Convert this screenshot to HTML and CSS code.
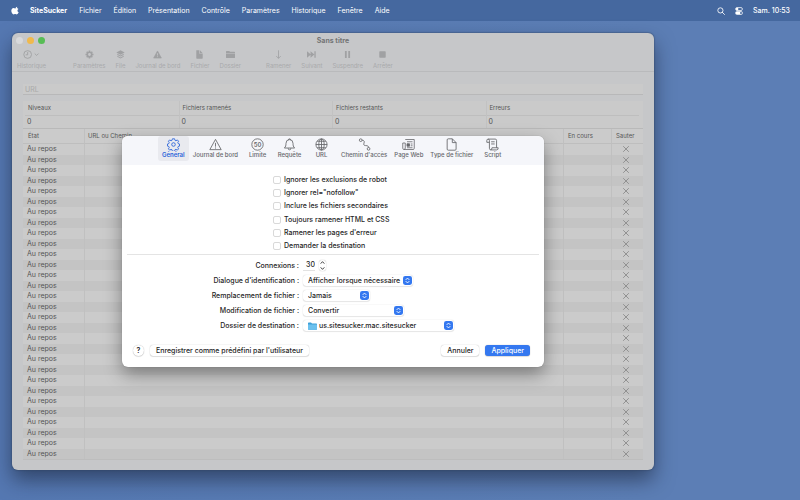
FILE: index.html
```html
<!DOCTYPE html>
<html lang="fr">
<head>
<meta charset="utf-8">
<title>SiteSucker</title>
<link rel="stylesheet" href="styles.css">
</head>
<body>
<svg class="sprite" aria-hidden="true">
  <symbol id="updown" viewBox="0 0 10 10"><rect width="10" height="10" rx="2.4" fill="#3478f0"/><path d="M3.300 4 5 2.300 6.700 4M3.300 6 5 7.700 6.700 6" fill="none" stroke="#fff" stroke-width="1" stroke-linecap="round" stroke-linejoin="round"/></symbol>
  <symbol id="cross" viewBox="0 0 8 8"><path d="M1.200 1.200 6.800 6.800M6.800 1.200 1.200 6.800" fill="none" stroke="#8b8b8b" stroke-width=".9"/></symbol>
</svg>

<header class="menubar">
  <svg class="apple" viewBox="0 0 24 24" aria-hidden="true"><path fill="#fff" d="M16.600 1c.2 1.500-.4 2.900-1.300 3.900-.9 1.100-2.300 1.900-3.700 1.800-.2-1.400.5-2.900 1.300-3.800C13.800 1.900 15.400 1.100 16.600 1zM21 17.200c-.6 1.300-.9 1.900-1.700 3-1.100 1.600-2.600 3.500-4.500 3.600-1.700 0-2.100-1.100-4.400-1.100s-2.800 1.100-4.500 1.100c-1.900-.1-3.300-1.900-4.400-3.500C-1.400 15.800-1.700 10.600.2 7.900 1.500 5.900 3.600 4.800 5.600 4.800c2 0 3.300 1.100 4.900 1.100 1.600 0 2.600-1.100 4.900-1.100 1.800 0 3.600 1 4.900 2.600-4.300 2.400-3.600 8.500.7 9.800z" transform="translate(2 0)"/></svg>
  <nav class="menus">
    <a class="app" href="#">SiteSucker</a>
    <a href="#">Fichier</a>
    <a href="#">Édition</a>
    <a href="#">Présentation</a>
    <a href="#">Contrôle</a>
    <a href="#">Paramètres</a>
    <a href="#">Historique</a>
    <a href="#">Fenêtre</a>
    <a href="#">Aide</a>
  </nav>
  <div class="status">
    <svg class="status-icon" viewBox="0 0 16 16" fill="none" stroke="#fff" stroke-width="1.700"><circle cx="6.800" cy="6.800" r="5.200"/><path d="M10.600 10.600 15 15" stroke-linecap="round"/></svg>
    <svg class="status-icon" viewBox="0 0 16 16"><rect x="1.200" y="1.200" width="13.600" height="5.800" rx="2.800" fill="none" stroke="#fff" stroke-width="1.500"/><circle cx="4.300" cy="4.100" r="2.500" fill="#fff"/><rect x=".5" y="8.600" width="15" height="7" rx="3.400" fill="#fff"/><circle cx="12" cy="12.100" r="2" fill="#45689f"/></svg>
    <time>Sam. 10:53</time>
  </div>
</header>

<main class="desktop">
  <section class="window">
    <div class="titlebar">
      <span class="lights"><i class="close"></i><i class="min"></i><i class="max"></i></span>
      <h1>Sans titre</h1>
    </div>
    <div class="toolbar">
      <button class="tool history" disabled><svg viewBox="0 0 26 14" fill="none" stroke="#a0a1a3" stroke-width="1.400"><circle cx="7" cy="7" r="6"/><path d="M7 3.200V7.500H4M18 5.500 21 8.500 24 5.500"/></svg>Historique</button>
      <button class="tool" disabled><svg viewBox="0 0 14 14" stroke="#a0a1a3"><circle cx="7" cy="7" r="3.500" fill="none" stroke-width="2.600"/><path d="M7 .8V3M7 11v2.200M.8 7H3M11 7h2.200M2.600 2.600 4.200 4.200M9.800 9.800l1.600 1.600M2.600 11.400 4.200 9.800M9.800 4.200l1.600-1.600" stroke-width="2.400"/></svg>Paramètres</button>
      <button class="tool" disabled><svg viewBox="0 0 14 14" fill="#a0a1a3"><path d="M7 .5 13.500 4 7 7.200.5 4zM2 6l5 2.600L12 6v1.600l-5 2.600-5-2.600zM2 9l5 2.600L12 9v1.500l-5 2.900-5-2.900z"/></svg>File</button>
      <button class="tool" disabled><svg viewBox="0 0 14 14"><path d="M7 1.500 13 12.500H1z" fill="#a0a1a3" stroke="#a0a1a3" stroke-linejoin="round"/><path d="M7 5v3.600M7 9.800v1.300" stroke="#c7c8ca" stroke-width="1.200"/></svg>Journal de bord</button>
      <button class="tool" disabled><svg viewBox="0 0 14 14" fill="#a0a1a3"><path d="M2 .5h4.800v5.300h5.200V12.500q0 1-1 1H3q-1 0-1-1zM7.800.5 12 4.900H7.800z"/></svg>Fichier</button>
      <button class="tool" disabled><svg viewBox="0 0 14 14" fill="#a0a1a3"><path d="M0 2.500Q0 1.500 1 1.500H5l1.300 1.300H13q1 0 1 1V5H0zM0 6h14v5.500q0 1-1 1H1q-1 0-1-1z"/></svg>Dossier</button>
      <button class="tool run" disabled><svg viewBox="0 0 14 14" fill="none" stroke="#a0a1a3" stroke-width="1.300"><path d="M7 .5V13M3.500 9.500 7 13 10.500 9.500"/></svg>Ramener</button>
      <button class="tool" disabled><svg viewBox="0 0 14 14" fill="#a0a1a3"><path d="M0 2 6 7 0 12zM5.500 2 11.500 7l-6 5zM11.500 2h2v10h-2z"/></svg>Suivant</button>
      <button class="tool" disabled><svg viewBox="0 0 14 14" fill="#a0a1a3"><path d="M3 1.500h2.800v11H3zM8.200 1.500H11v11H8.200z"/></svg>Suspendre</button>
      <button class="tool" disabled><svg viewBox="0 0 14 14" fill="#a0a1a3"><rect x="2" y="2" width="10" height="10" rx="1"/></svg>Arrêter</button>
    </div>
    <div class="content">
      <input class="url" type="text" placeholder="URL" aria-label="URL">
      <dl class="stats">
        <div><dt>Niveaux</dt><dd>0</dd></div>
        <div><dt>Fichiers ramenés</dt><dd>0</dd></div>
        <div><dt>Fichiers restants</dt><dd>0</dd></div>
        <div><dt>Erreurs</dt><dd>0</dd></div>
      </dl>
      <table class="queue">
        <colgroup><col class="c-state"><col><col class="c-run"><col class="c-skip"></colgroup>
        <thead><tr><th>État</th><th>URL ou Chemin</th><th>En cours</th><th>Sauter</th></tr></thead>
        <tbody id="rows"></tbody>
      </table>
    </div>

    <form class="sheet">
      <nav class="tabs">
        <button type="button" class="tab active"><svg viewBox="0 0 24 24"><path stroke-linejoin="round" d="M10 1.500h4l.8 2.900 1.700.7 2.600-1.500 2.300 2.300-1.500 2.600.7 1.700 2.400.8v4l-2.400.8-.7 1.700 1.500 2.600-2.300 2.300-2.600-1.500-1.700.7-.8 2.900h-4l-.8-2.900-1.700-.7-2.600 1.500-2.300-2.300 1.500-2.600-.7-1.700-2.400-.8v-4l2.400-.8.7-1.700-1.500-2.600 2.300-2.300 2.600 1.500 1.700-.7z"/><circle cx="12" cy="12" r="3.300"/></svg>Général</button>
        <button type="button" class="tab"><svg viewBox="0 0 24 24"><path stroke-linejoin="round" d="M12 2.500 22.500 21.500H1.500zM12 9v7M12 17.500v2"/></svg>Journal de bord</button>
        <button type="button" class="tab"><svg viewBox="0 0 24 24"><circle cx="12" cy="12" r="10.500"/><text x="12" y="16">50</text></svg>Limite</button>
        <button type="button" class="tab"><svg viewBox="0 0 24 24"><path stroke-linejoin="round" d="M2.500 18.500C5 16 5.500 14 5.500 10a6.500 7 0 0 1 13 0c0 4 .5 6 3 8.500zM9.500 19a2.500 2.800 0 0 0 5 0M10 3.500a2 2 0 0 1 4 0"/></svg>Requête</button>
        <button type="button" class="tab"><svg viewBox="0 0 24 24"><circle cx="12" cy="12" r="10.300"/><ellipse cx="12" cy="12" rx="5" ry="10.300"/><path d="M12 1.700v20.600M1.700 12h20.600M4 6h16M4 18h16"/></svg>URL</button>
        <button type="button" class="tab"><svg viewBox="0 0 24 24"><circle cx="5" cy="4" r="2.500"/><circle cx="19.500" cy="20" r="2.500"/><path d="M7.500 4c4.500 0 4.500 3 3.500 5.500-1 3 0 4.500 3 4.500 4 0 5.500 1 5.500 3.500"/></svg>Chemin d'accès</button>
        <button type="button" class="tab"><svg viewBox="0 0 26 24"><path d="M6.500 2h18v17.500q0 2.500-2.500 2.500H4q-2.500 0-2.500-2.500V9h5V19q0 3-2.500 3M10 6.500h11M17.500 11H21M17.500 14.500H21M10 18.500h11"/><path class="solid" d="M10 10.500h5v5h-5z"/></svg>Page Web</button>
        <button type="button" class="tab"><svg viewBox="0 0 24 24"><path d="M4 3.500Q4 1.500 6 1.500h7.500L20.500 8.500V20.500q0 2-2 2H6q-2 0-2-2zM13.500 1.500V8.500h7"/></svg>Type de fichier</button>
        <button type="button" class="tab"><svg viewBox="0 0 24 24"><path d="M6 8H1.500V4.500a2.400 2.400 0 0 1 4.800 0V19q0 3 3 3h10.500q2.700 0 2.700-4H11q0 4-2.500 4M4 2h13q2.500 0 2.500 2.500V18M9.500 7h6.500M9.500 11h6.500"/></svg>Script</button>
      </nav>

      <div class="checks">
        <label><input type="checkbox">Ignorer les exclusions de robot</label>
        <label><input type="checkbox">Ignorer rel="nofollow"</label>
        <label><input type="checkbox">Inclure les fichiers secondaires</label>
        <label><input type="checkbox">Toujours ramener HTML et CSS</label>
        <label><input type="checkbox">Ramener les pages d'erreur</label>
        <label><input type="checkbox">Demander la destination</label>
      </div>
      <hr>
      <div class="fields">
        <label for="conn">Connexions :</label>
        <div class="stepper"><input id="conn" type="text" value="30"><svg viewBox="0 0 6 12" aria-hidden="true"><path d="M1 4 3 1.800 5 4M1 8l2 2.200L5 8"/></svg></div>
        <label for="ident">Dialogue d'identification :</label>
        <div class="pop wide"><select id="ident"><option>Afficher lorsque nécessaire</option></select><svg><use href="#updown"/></svg></div>
        <label for="repl">Remplacement de fichier :</label>
        <div class="pop narrow"><select id="repl"><option>Jamais</option></select><svg><use href="#updown"/></svg></div>
        <label for="modif">Modification de fichier :</label>
        <div class="pop medium"><select id="modif"><option>Convertir</option></select><svg><use href="#updown"/></svg></div>
        <label for="dest">Dossier de destination :</label>
        <div class="pop full"><select id="dest"><option>us.sitesucker.mac.sitesucker</option></select><svg class="folder" viewBox="0 0 18 16"><path d="M0 2.500Q0 1 1.500 1H6l2 2h8.500Q18 3 18 4.500V14q0 1.500-1.500 1.500h-15Q0 15.500 0 14z" fill="#3c9fd8"/><path d="M0 5h18v9q0 1.500-1.500 1.500h-15Q0 15.500 0 14z" fill="#6cc1ee"/></svg><svg><use href="#updown"/></svg></div>
      </div>
      <footer class="actions">
        <button type="button" class="btn help" aria-label="Aide">?</button>
        <button type="button" class="btn">Enregistrer comme prédéfini par l'utilisateur</button>
        <button type="button" class="btn cancel">Annuler</button>
        <button type="submit" class="btn primary">Appliquer</button>
      </footer>
    </form>
  </section>
</main>
<script src="app.js"></script>
</body>
</html>
```
FILE: styles.css
```css
* { box-sizing: border-box; }
body {
  margin: 0;
  min-height: 100vh;
  overflow: hidden;
  display: flex;
  flex-direction: column;
  font: 400 7px/10px Inter, "Liberation Sans", sans-serif;
  background: linear-gradient(90deg, #5578b2, #5c7eb5 80%);
  color: #262626;
}
button, input, select { font: inherit; color: inherit; margin: 0; padding: 0; border: 0; background: none; }
.sprite { display: none; }

.menubar {
  display: flex;
  align-items: center;
  height: 21px;
  padding: 0 10px 0 11px;
  background: #45689f;
  color: #fff;
}
.apple { width: 8px; height: 9px; margin-right: 11px; }
.menus { display: flex; gap: 12px; }
.menus a { color: inherit; text-decoration: none; }
.menus .app { font-weight: 700; }
.status { display: flex; align-items: center; gap: 10px; margin-left: auto; font-weight: 500; }
.status-icon { width: 8px; height: 8px; }

.desktop { flex: 1; padding: 12px 146px 30px 12px; }
.window {
  position: relative;
  border-radius: 6px;
  background: #c6c7c9;
  box-shadow: 0 0 1px 1px rgba(50, 70, 100, .35), 0 10px 20px rgba(20, 30, 50, .55);
}
.titlebar { display: flex; align-items: center; height: 15px; padding: 0 4px; }
.lights { display: flex; gap: 4px; flex: 1; }
.lights i { width: 7px; height: 7px; border-radius: 50%; }
.close { background: #d8d9db; }
.min { background: #f0b94c; }
.max { background: #57bd55; }
.titlebar h1 { margin: 0; font-size: 7px; font-weight: 700; color: #737475; }
.titlebar::after { content: ""; flex: 1; }

.toolbar {
  display: flex;
  gap: 10px;
  height: 24px;
  padding: 2px 5px 0;
  border-bottom: 1px solid #b9babc;
}
.tool {
  display: flex;
  flex-direction: column;
  align-items: center;
  gap: 2px;
  font-size: 6px;
  line-height: 10px;
  color: #a9aaac;
}
.tool svg { height: 9px; width: 9px; }
.tool.history { margin-right: 17px; }
.tool.history svg { width: 17px; }
.tool.run { margin-left: 15px; }

.content { padding: 12px 11px 10px; }
.url {
  display: block;
  width: 100%;
  height: 11px;
  padding: 0 2px;
  background: #cacaca;
  border-bottom: 1px solid #b8b8b9;
}
.url::placeholder { color: #a9a9a9; opacity: 1; }
.stats {
  display: grid;
  grid-template-columns: repeat(4, 1fr);
  margin: 6px 0 0;
  padding: 0 4px 0 2px;
  background: #cacaca;
  border-bottom: 1px solid #b9b9b9;
  color: #555;
}
.stats div + div { border-left: 1px solid #c2c2c2; }
.stats dt { padding: 0 3px; font-size: 6px; line-height: 14px; border-bottom: 1px solid #bebebe; }
.stats dd { margin: 0; padding: 0 2px; line-height: 12px; }

.queue {
  width: 100%;
  height: 331px;
  border-collapse: separate;
  border-spacing: 0;
  table-layout: fixed;
  background: #cbcbcb;
  color: #555;
  border-bottom: 1px solid #bdbdbd;
}
.c-state { width: 61px; }
.c-run { width: 48px; }
.c-skip { width: 32px; }
.queue th, .queue td { padding: 0; text-align: left; }
.queue th { height: 15px; padding: 0 4px; font-size: 6px; font-weight: 400; line-height: 12px; border-bottom: 1px solid #bebebe; }
.queue th:first-child { padding-left: 5px; }
.queue td { padding: 0 4px; line-height: 10px; }
.queue td + td, .queue th + th { border-left: 1px solid #c0c0c0; }
.queue th:nth-child(2) { padding-left: 3px; }
.queue tbody tr:nth-child(even) { background: #c4c4c4; }
.queue td:last-child { padding-right: 8px; }
.queue svg { display: block; width: 8px; height: 8px; margin: 0 auto; }

.sheet {
  position: absolute;
  top: 103px;
  left: 50%;
  width: 422px;
  transform: translateX(-50%);
  border-radius: 6px;
  background: #fff;
  font-weight: 500;
  box-shadow: 0 0 1px rgba(0, 0, 0, .3), 0 7px 18px rgba(0, 0, 0, .38);
}
.tabs {
  display: flex;
  justify-content: center;
  gap: 1px;
  height: 29px;
  padding-bottom: 4px;
  border-radius: 6px 6px 0 0;
  background: #f5f6fa;
}
.tab {
  display: flex;
  flex-direction: column;
  align-items: center;
  min-width: 31px;
  padding: 2px 3px 0;
  border-radius: 3px;
  font-size: 6px;
  line-height: 8px;
  color: #66676b;
}
.tab svg { width: 13px; height: 13px; fill: none; stroke: #66676b; stroke-width: 1.6; }
.tab text { font: 600 11px Inter, sans-serif; text-anchor: middle; fill: #66676b; stroke: none; }
.tab .solid { fill: #66676b; }
.tab.active { background: #e9eaef; color: #2962d9; font-weight: 600; }
.tab.active svg { stroke: #2962d9; }

.checks {
  display: grid;
  height: 80px;
  margin: 8px 0 0 151px;
  align-items: center;
}
.checks label { display: flex; align-items: center; gap: 3px; }
.checks input {
  appearance: none;
  width: 8px;
  height: 8px;
  border: 1px solid #d9d9d9;
  border-radius: 2px;
  background: #fff;
}
.sheet hr { margin: 1px 5px 3px; border: 0; border-top: 1px solid #e4e4e4; }

.fields {
  display: grid;
  grid-template-columns: 177px 1fr;
  grid-auto-rows: 15px;
  column-gap: 4px;
  align-items: center;
}
.fields > label { text-align: right; }
.stepper { display: flex; align-items: center; gap: 4px; }
.stepper input { width: 12px; height: 10px; border-bottom: 1px solid #e2e2e2; text-align: right; }
.stepper svg {
  width: 7px;
  height: 11px;
  border-radius: 3px;
  box-shadow: 0 0 1px rgba(0, 0, 0, .4);
  fill: none;
  stroke: #333;
}
.pop { position: relative; height: 11px; }
.pop select {
  display: block;
  appearance: none;
  width: 100%;
  height: 11px;
  padding: 0 12px 0 5px;
  border-radius: 3px;
  box-shadow: 0 0 1px rgba(0, 0, 0, .25), 0 1px 1px rgba(0, 0, 0, .08);
}
.pop svg { position: absolute; right: 1px; top: 1px; width: 9px; height: 9px; pointer-events: none; }
.pop .folder { left: 5px; top: 2px; width: 9px; height: 8px; }
.wide { width: 110px; }
.narrow { width: 67px; }
.medium { width: 101px; }
.full { width: 151px; }
.full select { padding-left: 16px; }

.actions { display: flex; align-items: center; gap: 6px; padding: 12px 14px 11px 11px; }
.btn {
  height: 11px;
  padding: 0 6px;
  border-radius: 3px;
  background: #fff;
  box-shadow: 0 0 1px rgba(0, 0, 0, .35), 0 1px 1px rgba(0, 0, 0, .1);
  line-height: 11px;
}
.help { width: 11px; padding: 0; border-radius: 50%; font-weight: 600; }
.cancel { margin-left: auto; }
.primary { background: #3478f0; color: #fff; }
```
FILE: app.js
```js
const queue = document.getElementById("rows");
for (let i = 0; i < 30; i++) {
  queue.insertAdjacentHTML("beforeend",
    '<tr><td>Au repos</td><td></td><td></td><td><svg viewBox="0 0 8 8"><use href="#cross"/></svg></td></tr>');
}
```
